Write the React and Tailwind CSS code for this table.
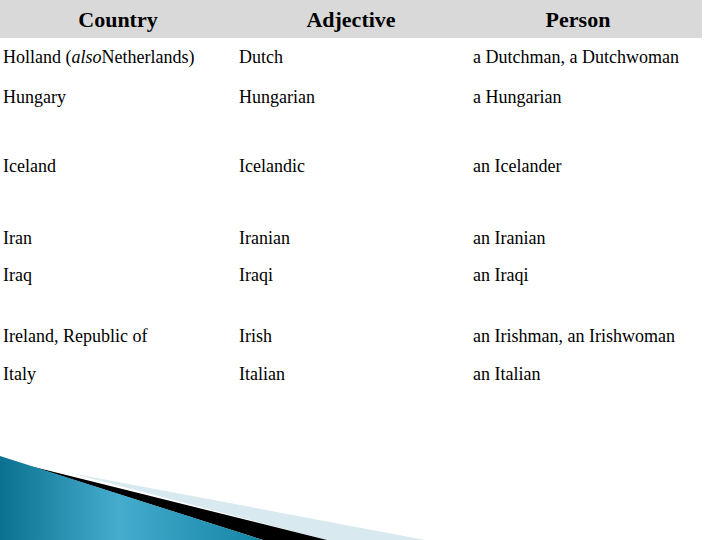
import React from 'react';

const rows = [
  { country: <>Holland (<i>also</i>Netherlands)</>, adjective: 'Dutch', person: 'a Dutchman, a Dutchwoman', h: 'h-[40px]' },
  { country: 'Hungary', adjective: 'Hungarian', person: 'a Hungarian', h: 'h-[69px]' },
  { country: 'Iceland', adjective: 'Icelandic', person: 'an Icelander', h: 'h-[72px]' },
  { country: 'Iran', adjective: 'Iranian', person: 'an Iranian', h: 'h-[37px]' },
  { country: 'Iraq', adjective: 'Iraqi', person: 'an Iraqi', h: 'h-[61px]' },
  { country: 'Ireland, Republic of', adjective: 'Irish', person: 'an Irishman, an Irishwoman', h: 'h-[38px]' },
  { country: 'Italy', adjective: 'Italian', person: 'an Italian', h: 'h-[40px]' },
];

const Corner = () => (
  <svg className="absolute bottom-0 left-0" width="440" height="90" viewBox="0 450 440 90">
    <defs>
      <linearGradient id="teal" x1="0" y1="0" x2="263" y2="0" gradientUnits="userSpaceOnUse">
        <stop offset="0" stopColor="#0a7290" />
        <stop offset="0.45" stopColor="#45acce" />
        <stop offset="1" stopColor="#1484a4" />
      </linearGradient>
    </defs>
    <polygon points="70,473 425,540 327,540" fill="#d8e9f0" />
    <polygon points="30,466 327,540 263,540" fill="#000000" />
    <polygon points="0,456 263,540 0,540" fill="url(#teal)" />
  </svg>
);

export default function App() {
  return (
    <div className="relative w-[720px] h-[540px] bg-white overflow-hidden [font-family:'Liberation_Serif',serif] text-black">
      <div className="w-[702px]">
        <div className="grid grid-cols-[236px_232px_234px] h-[38px] bg-[#d9d9d9] items-center text-[22px] font-bold">
          <div className="text-center">Country</div>
          <div className="text-center pr-[2px]">Adjective</div>
          <div className="text-center pr-[14px]">Person</div>
        </div>
        {rows.map((r, i) => (
          <div key={i} className={`grid grid-cols-[236px_232px_234px] text-[18px] leading-[20px] pt-[9px] ${r.h}`}>
            <div className="pl-[3px]">{r.country}</div>
            <div className="pl-[3px]">{r.adjective}</div>
            <div className="pl-[5px]">{r.person}</div>
          </div>
        ))}
      </div>
      <Corner />
    </div>
  );
}
